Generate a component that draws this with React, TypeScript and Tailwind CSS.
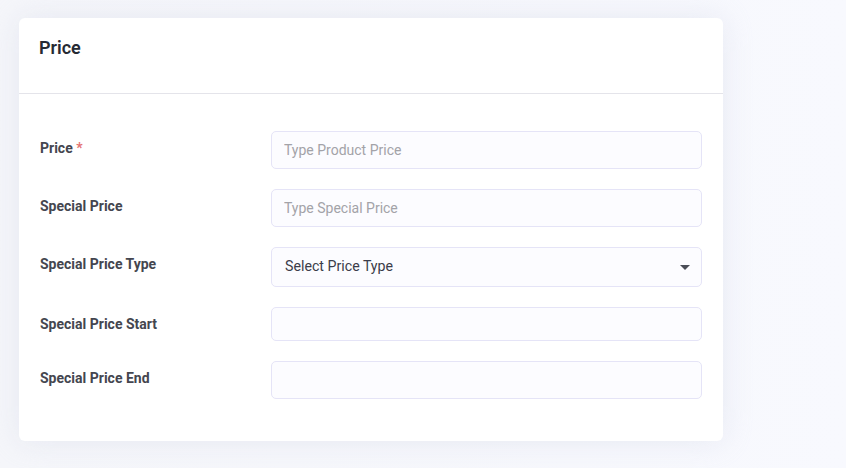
import { ReactNode } from "react";

const rows: { label: ReactNode; placeholder?: string; h: string; select?: boolean }[] = [
  {
    label: (
      <>
        Price <span className="text-[#e57373]">*</span>
      </>
    ),
    placeholder: "Type Product Price",
    h: "h-[38px]",
  },
  { label: "Special Price", placeholder: "Type Special Price", h: "h-[38px]" },
  { label: "Special Price Type", h: "h-[40px]", select: true },
  { label: "Special Price Start", h: "h-[34px]" },
  { label: "Special Price End", h: "h-[38px]" },
];

function Field({ placeholder, h, select }: { placeholder?: string; h: string; select?: boolean }) {
  if (select) {
    return (
      <div
        className={`${h} flex items-center justify-between rounded-[5px] border border-[#e5e4f7] bg-[#fcfcff] pl-[13px] pr-[11px] text-[14.2px] text-[#3b3d4a]`}
      >
        <span>Select Price Type</span>
        <svg width="10" height="5" viewBox="0 0 10 5">
          <path d="M0 0h10L5 5z" fill="#4a4d57" />
        </svg>
      </div>
    );
  }
  return (
    <input
      placeholder={placeholder}
      className={`${h} w-full rounded-[5px] border border-[#e5e4f7] bg-[#fcfcff] px-[12px] text-[14px] text-[#3b3d4a] outline-none placeholder:text-[#a3a3a8]`}
    />
  );
}

export default function App() {
  return (
    <div
      className="min-h-[468px] bg-gradient-to-r from-[#f5f6fa] to-[#f8f9fe] pl-[19px] pt-[18px] pb-[28px]"
      style={{ fontFamily: "Roboto, 'Liberation Sans', sans-serif" }}
    >
      <div className="w-[704px] rounded-[6px] bg-white shadow-[0_0_30px_rgba(210,214,230,0.45)]">
        <div className="h-[76px] border-b border-[#e4e4ea] px-[20px] pt-[17px]">
          <h2 className="text-[18px] font-semibold leading-[26px] text-[#262a33]">Price</h2>
        </div>
        <div className="flex flex-col gap-[20px] px-[21px] pt-[37px] pb-[42px]">
          {rows.map((r, i) => (
            <div key={i} className="flex items-start">
              <label className="w-[231px] pt-[7px] text-[14px] font-bold leading-[20px] text-[#44464f]">
                {r.label}
              </label>
              <div className="flex-1">
                <Field placeholder={r.placeholder} h={r.h} select={r.select} />
              </div>
            </div>
          ))}
        </div>
      </div>
    </div>
  );
}
